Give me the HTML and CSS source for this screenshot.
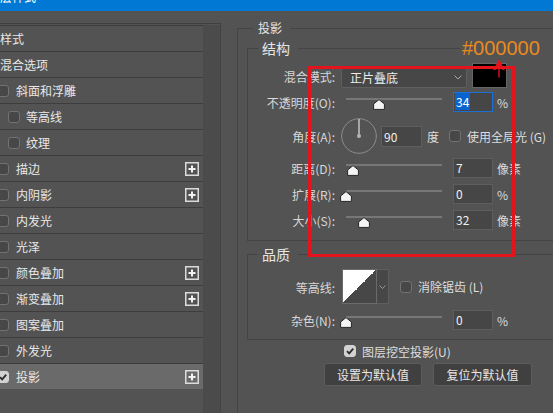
FILE: index.html
```html
<!DOCTYPE html>
<html lang="zh-CN">
<head>
<meta charset="utf-8">
<title>图层样式</title>
<link rel="stylesheet" href="styles.css">
</head>
<body>
<div class="titlebar"><span class="title">图层样式</span></div>
<div class="main">
  <div class="side">
    <div class="list">
      <div class="row"><span>样式</span></div>
      <div class="row"><span>混合选项</span></div>
      <div class="row"><i class="cb"></i><span>斜面和浮雕</span></div>
      <div class="row sub"><i class="cb"></i><span>等高线</span></div>
      <div class="row sub"><i class="cb"></i><span>纹理</span></div>
      <div class="row"><i class="cb"></i><span>描边</span><svg class="plus" width="14" height="14" viewBox="0 0 14 14"><rect x="0.75" y="0.75" width="12.5" height="12.5" fill="none" stroke="#dcdcdc" stroke-width="1.5"/><path d="M7 3.5V10.5M3.5 7H10.5" stroke="#f2f2f2" stroke-width="2"/></svg></div>
      <div class="row"><i class="cb"></i><span>内阴影</span><svg class="plus" width="14" height="14" viewBox="0 0 14 14"><rect x="0.75" y="0.75" width="12.5" height="12.5" fill="none" stroke="#dcdcdc" stroke-width="1.5"/><path d="M7 3.5V10.5M3.5 7H10.5" stroke="#f2f2f2" stroke-width="2"/></svg></div>
      <div class="row"><i class="cb"></i><span>内发光</span></div>
      <div class="row"><i class="cb"></i><span>光泽</span></div>
      <div class="row"><i class="cb"></i><span>颜色叠加</span><svg class="plus" width="14" height="14" viewBox="0 0 14 14"><rect x="0.75" y="0.75" width="12.5" height="12.5" fill="none" stroke="#dcdcdc" stroke-width="1.5"/><path d="M7 3.5V10.5M3.5 7H10.5" stroke="#f2f2f2" stroke-width="2"/></svg></div>
      <div class="row"><i class="cb"></i><span>渐变叠加</span><svg class="plus" width="14" height="14" viewBox="0 0 14 14"><rect x="0.75" y="0.75" width="12.5" height="12.5" fill="none" stroke="#dcdcdc" stroke-width="1.5"/><path d="M7 3.5V10.5M3.5 7H10.5" stroke="#f2f2f2" stroke-width="2"/></svg></div>
      <div class="row"><i class="cb"></i><span>图案叠加</span></div>
      <div class="row"><i class="cb"></i><span>外发光</span></div>
      <div class="row sel"><i class="cb on"><svg width="10" height="10" viewBox="0 0 10 10"><path d="M2 5.2L4.2 7.4L8.2 2.6" fill="none" stroke="#2b2b2b" stroke-width="1.8"/></svg></i><span>投影</span><svg class="plus" width="14" height="14" viewBox="0 0 14 14"><rect x="0.75" y="0.75" width="12.5" height="12.5" fill="none" stroke="#dcdcdc" stroke-width="1.5"/><path d="M7 3.5V10.5M3.5 7H10.5" stroke="#f2f2f2" stroke-width="2"/></svg></div>
    </div>
    <div class="scroll"></div>
  </div>

  <div class="content">
    <div class="grp outer">
      <div class="legend">投影</div>

      <div class="grp inner struct">
        <div class="legend">结构</div>
        <div class="form">
          <div class="frow r-mode">
            <span class="lbl">混合模式:</span>
            <div class="select"><span>正片叠底</span><svg width="8" height="5" viewBox="0 0 8 5"><path d="M0.5 0.5L4 4L7.5 0.5" fill="none" stroke="#a8a8a8" stroke-width="1"/></svg></div>
            <div class="swatch"></div>
          </div>
          <div class="frow r-slider">
            <span class="lbl">不透明度(O):</span>
            <div class="slider"><div class="track"></div><svg class="thumb" style="left:27px" width="12" height="11" viewBox="0 0 12 11"><path d="M6 0.6L11.4 5V10.4H0.6V5Z" fill="#f4f4f4" stroke="#262626" stroke-width="1"/></svg></div>
            <div class="input focus"><span class="hl">34</span></div>
            <span class="unit">%</span>
          </div>
          <div class="frow r-angle">
            <span class="lbl">角度(A):</span>
            <svg class="dial" width="36" height="36" viewBox="0 0 36 36"><circle cx="18" cy="18" r="17.3" fill="none" stroke="#8c8c8c" stroke-width="1"/><path d="M18 1V18" stroke="#c4c4c4" stroke-width="1.5"/><circle cx="18" cy="18" r="2" fill="#b4b4b4"/></svg>
            <div class="input w41">90</div>
            <span class="deg">度</span>
            <i class="cb gl"></i><span>使用全局光 (G)</span>
          </div>
          <div class="frow r-slider m4">
            <span class="lbl">距离(D):</span>
            <div class="slider"><div class="track"></div><svg class="thumb" style="left:1px" width="12" height="11" viewBox="0 0 12 11"><path d="M6 0.6L11.4 5V10.4H0.6V5Z" fill="#f4f4f4" stroke="#262626" stroke-width="1"/></svg></div>
            <div class="input">7</div>
            <span class="unit">像素</span>
          </div>
          <div class="frow r-slider m6">
            <span class="lbl">扩展(R):</span>
            <div class="slider"><div class="track"></div><svg class="thumb" style="left:-6px" width="12" height="11" viewBox="0 0 12 11"><path d="M6 0.6L11.4 5V10.4H0.6V5Z" fill="#f4f4f4" stroke="#262626" stroke-width="1"/></svg></div>
            <div class="input">0</div>
            <span class="unit">%</span>
          </div>
          <div class="frow r-slider m6">
            <span class="lbl">大小(S):</span>
            <div class="slider"><div class="track"></div><svg class="thumb" style="left:12px" width="12" height="11" viewBox="0 0 12 11"><path d="M6 0.6L11.4 5V10.4H0.6V5Z" fill="#f4f4f4" stroke="#262626" stroke-width="1"/></svg></div>
            <div class="input">32</div>
            <span class="unit">像素</span>
          </div>
        </div>
      </div>

      <div class="grp inner quality">
        <div class="legend">品质</div>
        <div class="form q">
          <div class="frow r-contour">
            <span class="lbl">等高线:</span>
            <div class="contour"></div>
            <div class="cdrop"><svg width="7" height="4" viewBox="0 0 7 4"><path d="M0.5 0.5L3.5 3.5L6.5 0.5" fill="none" stroke="#9a9a9a" stroke-width="1"/></svg></div>
            <i class="cb aa"></i><span>消除锯齿 (L)</span>
          </div>
          <div class="frow r-slider m6">
            <span class="lbl">杂色(N):</span>
            <div class="slider"><div class="track"></div><svg class="thumb" style="left:-6px" width="12" height="11" viewBox="0 0 12 11"><path d="M6 0.6L11.4 5V10.4H0.6V5Z" fill="#f4f4f4" stroke="#262626" stroke-width="1"/></svg></div>
            <div class="input">0</div>
            <span class="unit">%</span>
          </div>
        </div>
      </div>

      <div class="knock"><i class="cb on"><svg width="10" height="10" viewBox="0 0 10 10"><path d="M2 5.2L4.2 7.4L8.2 2.6" fill="none" stroke="#2b2b2b" stroke-width="1.8"/></svg></i><span>图层挖空投影(U)</span></div>
      <div class="buttons">
        <button class="btn b1">设置为默认值</button>
        <button class="btn b2">复位为默认值</button>
      </div>
    </div>
  </div>
</div>

<div class="note">#000000</div>
<div class="redbox"></div>
<svg class="arrow" width="14" height="20" viewBox="0 0 14 20"><path d="M7 0L13 11.5L7 9.5L1 11.5Z" fill="#e3141c"/><path d="M7 9V18.5" stroke="#e3141c" stroke-width="1.4"/></svg>
</body>
</html>
```
FILE: styles.css
```css
* { box-sizing: border-box; }
html, body { margin: 0; padding: 0; }
body {
  width: 553px;
  height: 413px;
  overflow: hidden;
  position: relative;
  background: #535353;
  color: #dedede;
  font-family: "Noto Sans CJK SC", "Noto Sans", sans-serif;
  font-size: 12px;
}

/* title bar */
.titlebar { height: 11px; background: #0078d4; overflow: hidden; }
.title { display: block; margin: -11px 0 0 -12px; color: #fff; line-height: 16px; }

.main { display: flex; align-items: flex-start; }

/* left list */
.side {
  flex: none;
  width: 221px;
  height: 402px;
  margin-top: 12px;
  border-top: 1px solid #3f3f3f;
  border-right: 1px solid #434343;
  display: flex;
}
.list { width: 203px; padding-top: 1px; flex: none; }
.scroll { flex: 1; background: #4b4b4b; margin-top: 1px; }
.row {
  height: 26px;
  border-top: 1px solid #3d3d3d;
  display: flex;
  align-items: center;
  padding-right: 4px;
  line-height: 16px;
  color: #e8e8e8;
  white-space: nowrap;
}
.row.sel { background: #6a6a6a; }
.cb {
  width: 12px;
  height: 12px;
  flex: none;
  border: 1px solid #727272;
  border-radius: 3px;
  background: #474747;
  display: flex;
  align-items: center;
  justify-content: center;
}
.cb.on { background: #d2d2d2; border-color: #d2d2d2; }
.row .cb { margin-left: -3px; margin-right: 7px; }
.row.sub .cb { margin-left: 8px; margin-right: 6px; }
.plus { margin-left: auto; flex: none; }

/* right side */
.content { flex: none; margin-left: 16px; margin-top: 17px; }
.grp { border: 1px solid #444; }
.outer { width: 330px; height: 390px; }
.legend {
  display: block;
  width: max-content;
  background: #535353;
  color: #e6e6e6;
}
.outer > .legend { margin: -9px 0 0 15px; padding: 0 8px 0 5px; line-height: 16px; font-size: 12px; }
.inner { margin-left: 9px; }
.inner > .legend { margin: -10px 0 0 10px; padding: 0 8px 0 4px; line-height: 18px; font-size: 14px; }
.struct { margin-top: 12px; }
.quality { margin-top: 13px; }

.form { padding: 6px 0 10px; }
.form.q { padding: 6px 0 9px; }
.frow { display: flex; align-items: center; white-space: nowrap; }
.lbl { width: 87px; margin-right: 6px; text-align: right; line-height: 18px; color: #d8d8d8; padding-top: 2px; }
.m4 { margin-top: 4px; }
.m6 { margin-top: 6px; }

.r-mode { height: 25px; align-items: flex-end; }
.r-mode .lbl { line-height: 22px; padding-top: 0; }
.select {
  width: 126px;
  height: 22px;
  border: 1px solid #5f5f5f;
  border-radius: 2px;
  background: #474747;
  display: flex;
  align-items: center;
  justify-content: space-between;
  padding: 0 4px 0 8px;
  color: #ececec;
}
.swatch { width: 35px; height: 25px; margin-left: 5px; background: #000; border: 1px solid #666; }

.r-slider { height: 20px; margin-top: 4px; }
.r-slider.m6 { margin-top: 6px; }
.slider { width: 96px; height: 20px; margin-left: 5px; position: relative; }
.track { height: 2px; margin-top: 6px; background: #777; }
.thumb { position: absolute; top: 7px; }
.input {
  width: 40px;
  height: 20px;
  margin-left: 11px;
  background: #464646;
  border: 1px solid #5e5e5e;
  padding-left: 2px;
  line-height: 18px;
  color: #f0f0f0;
}
.input.focus { border-color: #1c6fd4; padding-left: 1px; }
.hl { background: #0a62cc; color: #fff; padding: 0 1px; display: inline-block; line-height: 17px; }
.unit { margin-left: 4px; color: #dcdcdc; }

.r-angle { height: 36px; margin-top: 6px; }
.dial { flex: none; }
.input.w41 { width: 41px; height: 21px; margin-left: 4px; line-height: 19px; }
.deg { margin-left: 5px; }
.cb.gl { margin-left: 10px; margin-right: 6px; }

.r-contour { height: 35px; }
.contour {
  width: 35px;
  height: 35px;
  margin-left: 1px;
  border: 1px solid #6a6a6a;
  background: linear-gradient(to bottom right, #ffffff 50%, #474747 50%);
}
.cdrop {
  width: 12px;
  height: 35px;
  border: 1px solid #5e5e5e;
  border-left: none;
  background: #474747;
  display: flex;
  align-items: center;
  justify-content: center;
}
.cb.aa { margin-left: 11px; margin-right: 6px; }

.knock { height: 22px; display: flex; align-items: center; padding-left: 106px; }
.knock .cb { margin-right: 6px; }
.buttons { display: flex; margin-top: 1px; padding-left: 86px; gap: 11px; }
.btn {
  height: 23px;
  padding: 0;
  background: #404040;
  border: 1px solid #5c5c5c;
  border-radius: 3px;
  color: #e8e8e8;
  font-family: inherit;
  font-size: 12px;
  line-height: 20px;
}
.b1 { width: 98px; }
.b2 { width: 99px; }

/* annotation overlay */
.note {
  position: absolute;
  left: 460px;
  top: 36px;
  width: 93px;
  padding-left: 2px;
  background: #535353;
  color: #ea8a1f;
  font-family: "Liberation Sans", Arial, sans-serif;
  font-size: 20px;
  line-height: 24px;
}
.redbox {
  position: absolute;
  left: 308px;
  top: 66px;
  width: 207px;
  height: 191px;
  border: 3px solid #e3141c;
}
.arrow { position: absolute; left: 492px; top: 59px; }
```
